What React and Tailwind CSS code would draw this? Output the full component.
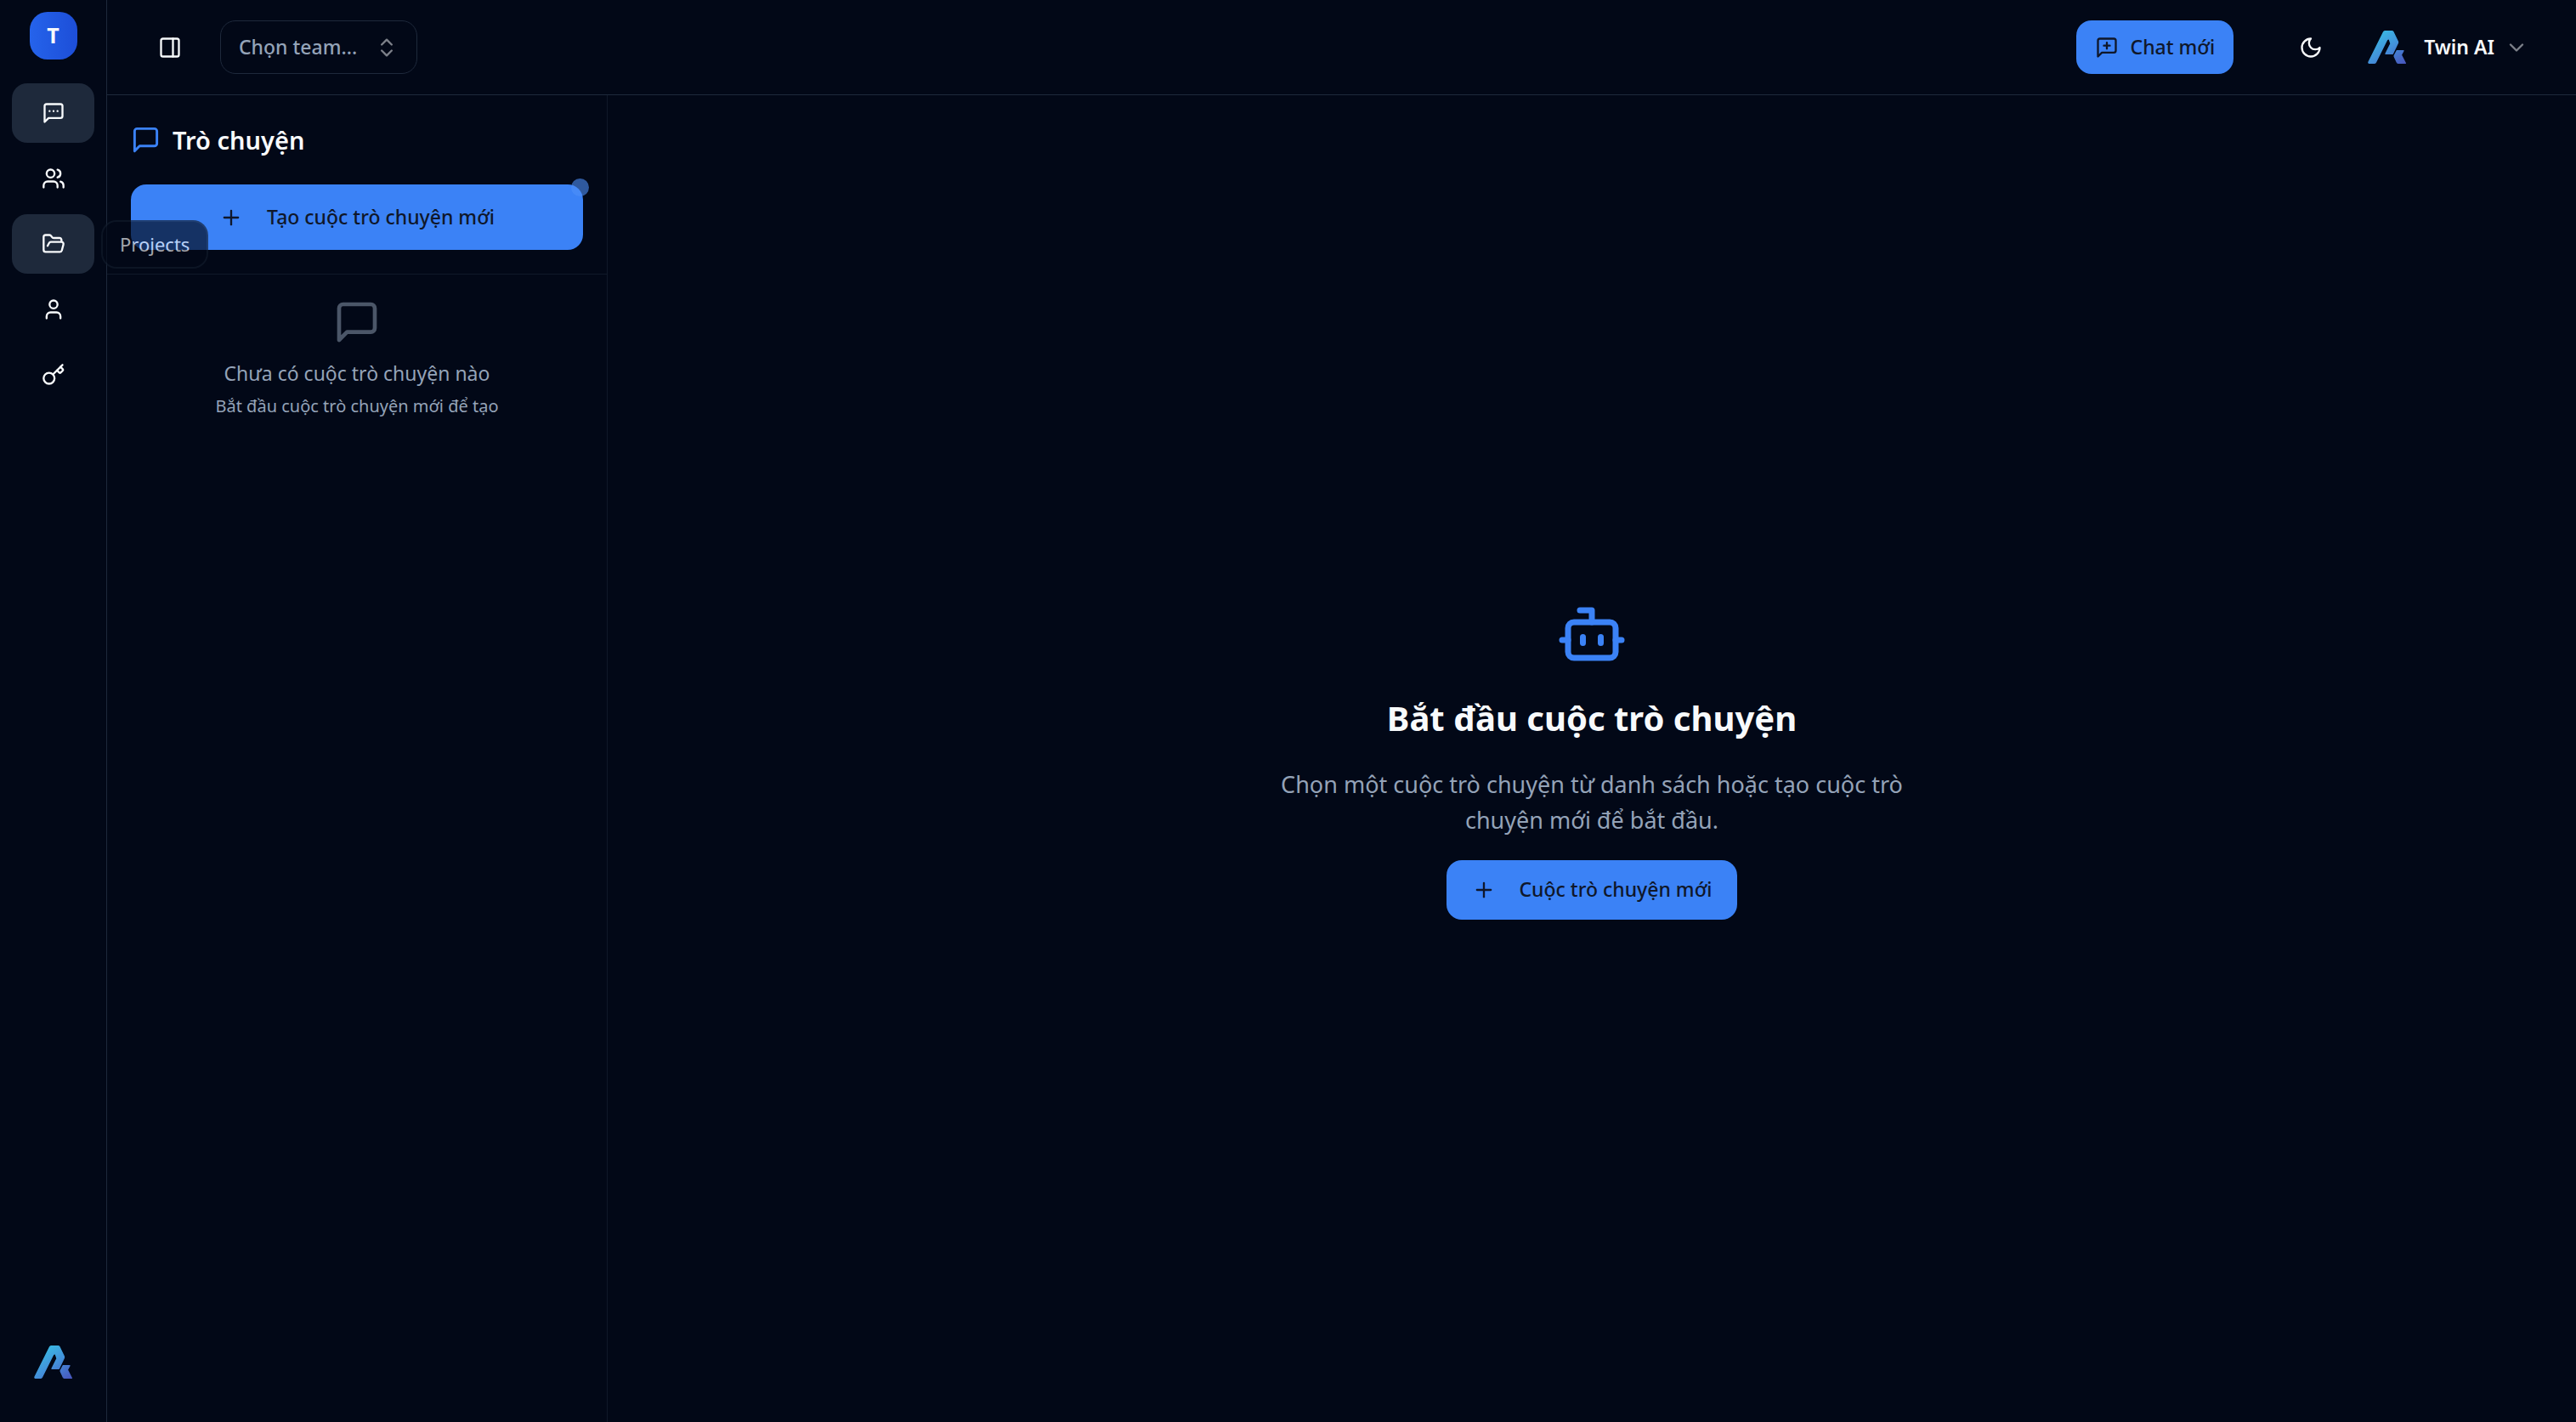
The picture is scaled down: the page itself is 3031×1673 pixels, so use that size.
import React from 'react';
import { Bot, ChevronDown, ChevronsUpDown, FolderOpen, Key, PanelRight, Plus } from 'lucide-react';

const BUBBLE = 'M21 15a2 2 0 0 1-2 2H7l-4 4V5a2 2 0 0 1 2-2h14a2 2 0 0 1 2 2z';

function Icon({ className = 'size-7', children }) {
  return (
    <svg
      viewBox="0 0 24 24"
      fill="none"
      stroke="currentColor"
      strokeWidth="2"
      strokeLinecap="round"
      strokeLinejoin="round"
      className={className}
      aria-hidden="true"
    >
      {children}
    </svg>
  );
}

function BrandMark({ id }) {
  return (
    <svg viewBox="0 0 135 117" className="h-[39px] w-[45px] shrink-0" role="img" aria-label="Twin AI logo">
      <defs>
        <linearGradient id={id} x1="40" y1="0" x2="125" y2="117" gradientUnits="userSpaceOnUse">
          <stop offset="0" stopColor="#39bde4" />
          <stop offset="0.5" stopColor="#4390da" />
          <stop offset="1" stopColor="#4858be" />
        </linearGradient>
      </defs>
      <g fill={`url(#${id})`} stroke={`url(#${id})`} strokeWidth="4" strokeLinejoin="round">
        <path d="M3 111 L56 5 Q58 2 62 2 L85 2 Q88 2 90 5 L106 38 Q107 41 106 44 L88 82 L63 82 L81 46 L76 31 Q73 27 68 32 L28 112 Q26 115 23 115 L5 115 Q2 115 3 111 Z" />
        <path d="M103 71 L126 71 L118 86 L133 115 L108 115 Q105 115 103 112 L94 92 Q93 90 94 88 Z" />
      </g>
    </svg>
  );
}

const navItems = [
  {
    label: 'Chat',
    active: true,
    icon: (
      <Icon>
        <path d={BUBBLE} />
        <path d="M8 10h.01M12 10h.01M16 10h.01" />
      </Icon>
    ),
  },
  {
    label: 'Teams',
    icon: (
      <Icon>
        <path d="M16 21v-2a4 4 0 0 0-4-4H6a4 4 0 0 0-4 4v2" />
        <circle cx="9" cy="7" r="4" />
        <path d="M22 21v-2a4 4 0 0 0-3-3.87" />
        <path d="M16 3.13a4 4 0 0 1 0 7.75" />
      </Icon>
    ),
  },
  { label: 'Projects', active: true, tooltip: true, icon: <FolderOpen className="size-7" /> },
  {
    label: 'Profile',
    icon: (
      <Icon>
        <path d="M19 21v-2a4 4 0 0 0-4-4H9a4 4 0 0 0-4 4v2" />
        <circle cx="12" cy="7" r="4" />
      </Icon>
    ),
  },
  { label: 'API keys', icon: <Key className="size-7" /> },
];

function NavItem({ item }) {
  return (
    <li className="relative">
      <button
        type="button"
        aria-label={item.label}
        className={`flex h-[70px] w-full items-center justify-center rounded-[18px] ${item.active ? 'bg-[#1e293b]' : ''}`}
      >
        {item.icon}
      </button>
      {item.tooltip && (
        <span
          role="tooltip"
          className="absolute left-full top-[7px] z-20 ml-2 flex h-[57px] items-center rounded-[18px] border-2 border-[#1e293b]/60 bg-[#020817] px-5 text-[22px] leading-[35px] opacity-65"
        >
          {item.label}
        </span>
      )}
    </li>
  );
}

function Sidebar() {
  return (
    <aside className="flex w-[126px] shrink-0 flex-col border-r border-[#1e293b] px-3.5 pt-3.5 pb-[51px]">
      <div className="flex size-14 items-center justify-center self-center rounded-[21px] bg-linear-to-r from-[#2563eb] to-[#1d4ed8] text-[25px] font-bold">
        T
      </div>
      <nav className="mt-7" aria-label="Main">
        <ul className="flex flex-col gap-[7px]">
          {navItems.map((item) => (
            <NavItem key={item.label} item={item} />
          ))}
        </ul>
      </nav>
      <div className="mt-auto flex justify-center">
        <BrandMark id="mark-sidebar" />
      </div>
    </aside>
  );
}

function Header() {
  return (
    <header className="flex h-28 shrink-0 items-center border-b border-[#1e293b] pl-[46px] pr-14">
      <button type="button" aria-label="Toggle panel" className="flex h-14 w-[56px] items-center justify-center">
        <PanelRight className="size-7" />
      </button>
      <div className="relative ml-[31px] flex items-center text-[23px] font-medium text-[#94a3b8]">
        <select
          aria-label="Team"
          className="h-[63px] w-[232px] appearance-none rounded-[18px] border border-[#1e293b] bg-transparent pl-[21px] pr-14"
        >
          <option>Chọn team...</option>
        </select>
        <ChevronsUpDown className="pointer-events-none absolute right-[22px] size-7 text-slate-50 opacity-50" />
      </div>
      <button
        type="button"
        className="ml-auto flex h-[63px] items-center gap-3.5 rounded-[18px] bg-[#3b82f6] px-[22px] text-[23px] font-medium text-[#0f172a]"
      >
        <Icon>
          <path d={BUBBLE} />
          <path d="M12 7v6M9 10h6" />
        </Icon>
        Chat mới
      </button>
      <button type="button" aria-label="Theme" className="ml-[56px] flex size-[70px] items-center justify-center">
        <Icon>
          <path d="M12 3a6 6 0 0 0 9 9 9 9 0 1 1-9-9Z" />
        </Icon>
      </button>
      <button type="button" className="ml-8 flex items-center text-[23px] font-semibold">
        <BrandMark id="mark-header" />
        <span className="ml-[21px]">Twin AI</span>
        <ChevronDown className="ml-3 size-7 opacity-50" />
      </button>
    </header>
  );
}

function ChatPanel() {
  return (
    <section className="w-[589px] shrink-0 border-r border-[#1e293b]/50">
      <div className="border-b border-[#1e293b]/50 p-7">
        <h2 className="flex h-[49px] items-center gap-3.5 text-[29px] font-semibold">
          <Icon className="size-[35px] text-[#3b82f6]">
            <path d={BUBBLE} />
          </Icon>
          Trò chuyện
        </h2>
        <div className="relative mt-7">
          <button
            type="button"
            className="flex h-[77px] w-full items-center justify-center gap-7 rounded-[18px] bg-[#3b82f6] text-[23px] font-medium text-[#0f172a]"
          >
            <Plus className="size-7" />
            Tạo cuộc trò chuyện mới
          </button>
          <span className="absolute -right-[7px] -top-[7px] size-[21px] rounded-full bg-[#4f8ff8] opacity-60" />
        </div>
      </div>
      <div className="flex flex-col items-center p-7 text-center text-[#94a3b8]">
        <Icon className="size-14 opacity-50">
          <path d={BUBBLE} />
        </Icon>
        <p className="mt-3.5 text-[23px] leading-[36px]">Chưa có cuộc trò chuyện nào</p>
        <p className="mt-[7px] text-[20px] leading-7">Bắt đầu cuộc trò chuyện mới để tạo</p>
      </div>
    </section>
  );
}

function EmptyState() {
  return (
    <main className="flex flex-1 flex-col items-center justify-center text-center">
      <Bot className="size-[84px] text-[#3b82f6]" />
      <h1 className="mt-7 text-[40px] font-bold leading-[58px]">Bắt đầu cuộc trò chuyện</h1>
      <p className="mt-7 max-w-[784px] text-[27px] leading-[42px] text-[#94a3b8]">
        Chọn một cuộc trò chuyện từ danh sách hoặc tạo cuộc trò chuyện mới để bắt đầu.
      </p>
      <button
        type="button"
        className="mt-[26px] flex h-[70px] items-center gap-7 rounded-[18px] bg-[#3b82f6] px-[30px] text-[23px] font-medium text-[#0f172a]"
      >
        <Plus className="size-7" />
        Cuộc trò chuyện mới
      </button>
    </main>
  );
}

export default function App() {
  return (
    <div className="flex min-h-screen bg-[#020817] font-['Segoe_UI','Noto_Sans',sans-serif] text-slate-50">
      <Sidebar />
      <div className="flex min-w-0 flex-1 flex-col">
        <Header />
        <div className="flex flex-1">
          <ChatPanel />
          <EmptyState />
        </div>
      </div>
    </div>
  );
}
